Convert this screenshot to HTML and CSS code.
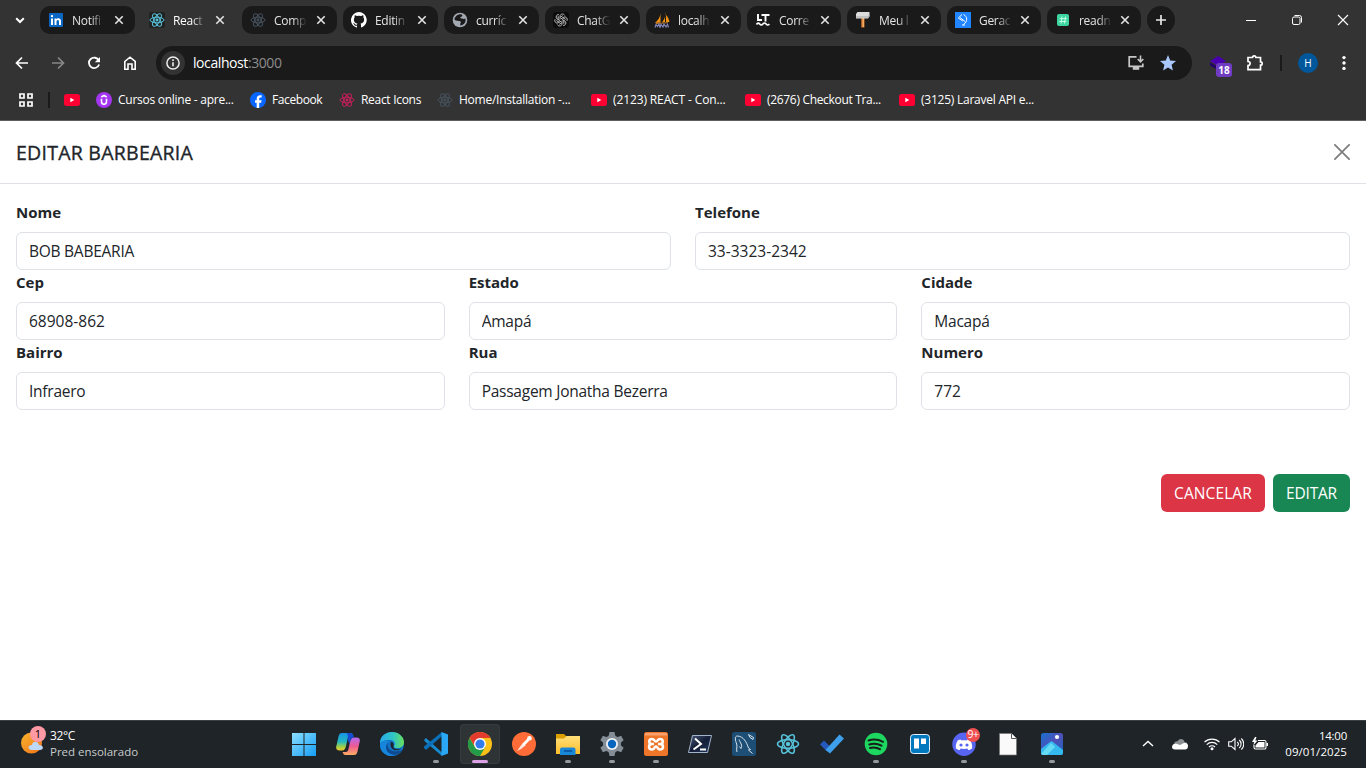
FILE: index.html
```html
<!DOCTYPE html>
<html lang="pt-BR">
<head>
<meta charset="utf-8">
<title>React App</title>
<link rel="stylesheet" href="styles.css">
</head>
<body>
<svg class="defs" aria-hidden="true">
  <symbol id="react" viewBox="0 0 24 24"><g fill="none" stroke="currentColor" stroke-width="1.5"><ellipse cx="12" cy="12" rx="10.500" ry="4.200"/><ellipse cx="12" cy="12" rx="10.500" ry="4.200" transform="rotate(60 12 12)"/><ellipse cx="12" cy="12" rx="10.500" ry="4.200" transform="rotate(120 12 12)"/></g><circle cx="12" cy="12" r="2.200" fill="currentColor"/></symbol>
  <symbol id="x" viewBox="0 0 10 10"><path d="M1.3 1.3l7.4 7.4M8.7 1.3L1.3 8.7" stroke="currentColor" stroke-width="1.6" fill="none"/></symbol>
  <symbol id="yt" viewBox="0 0 16 16"><rect y="2" width="16" height="12" rx="2.5" fill="#ff0033"/><path d="M6.3 5.7v4.6l4-2.3z" fill="#fff"/></symbol>
  <linearGradient id="win" x1="0" y1="0" x2="1" y2="1"><stop offset="0" stop-color="#8be0ff"/><stop offset="1" stop-color="#159cf5"/></linearGradient>
  <linearGradient id="sun" x1="0" y1="0" x2="1" y2="1"><stop offset="0" stop-color="#f7b52c"/><stop offset="1" stop-color="#f2711c"/></linearGradient>
  <linearGradient id="edgeTop" x1="0" y1="0" x2="1" y2="0"><stop offset="0" stop-color="#2aa7ec"/><stop offset=".55" stop-color="#30c5c5"/><stop offset="1" stop-color="#68e05a"/></linearGradient>
  <linearGradient id="copA" x1="0" y1="0" x2="0" y2="1"><stop offset="0" stop-color="#1692e8"/><stop offset=".5" stop-color="#25b8c0"/><stop offset=".8" stop-color="#a6d044"/><stop offset="1" stop-color="#f6c52e"/></linearGradient>
  <linearGradient id="copB" x1="0" y1="0" x2="0" y2="1"><stop offset="0" stop-color="#b46af2"/><stop offset=".5" stop-color="#ee5a91"/><stop offset="1" stop-color="#ffae62"/></linearGradient>
  <linearGradient id="photo" x1="0" y1="0" x2="1" y2="1"><stop offset="0" stop-color="#1771d0"/><stop offset=".5" stop-color="#5050b8"/><stop offset="1" stop-color="#1466bd"/></linearGradient>
  <linearGradient id="fold" x1="0" y1="0" x2="0" y2="1"><stop offset="0" stop-color="#ffe07a"/><stop offset="1" stop-color="#fbbd2c"/></linearGradient>
  <linearGradient id="ps" x1="0" y1="0" x2="1" y2="1"><stop offset="0" stop-color="#4b5c7c"/><stop offset=".5" stop-color="#141d36"/><stop offset="1" stop-color="#233961"/></linearGradient>
</svg>

<header class="browser">
  <div class="tabstrip">
    <svg class="tab-search" viewBox="0 0 12 12"><path d="M2.2 4.2L6 8l3.8-3.8" fill="none" stroke="#fff" stroke-width="2"/></svg>
    <div class="tab"><svg class="fav" viewBox="0 0 16 16"><rect x="1" y="1" width="14" height="14" rx="1" fill="#0a66c2"/><path d="M3 6.4h2V13H3zM6.5 6.4h1.9v.9c1-1.5 4.6-1.6 4.6 1.7v4h-2V9.7c0-2.2-2.5-2-2.5 0V13h-2z" fill="#fff"/><circle cx="4" cy="4.1" r="1.2" fill="#fff"/></svg><span class="tab-title">Notifi</span><svg class="tab-x"><use href="#x"/></svg></div>
    <div class="tab active"><svg class="fav cyan boxed"><use href="#react"/></svg><span class="tab-title">React</span><svg class="tab-x"><use href="#x"/></svg></div>
    <div class="tab"><svg class="fav slate"><use href="#react"/></svg><span class="tab-title">Comp</span><svg class="tab-x"><use href="#x"/></svg></div>
    <div class="tab"><svg class="fav" viewBox="0 0 16 16"><path fill="#fff" d="M8 0a8 8 0 0 0-2.5 15.6c.4.1.5-.2.5-.4v-1.5c-2.2.5-2.7-1-2.7-1-.4-.9-.9-1.2-.9-1.2-.7-.5.1-.5.1-.5.8.1 1.2.8 1.2.8.7 1.3 1.9.9 2.3.7.1-.5.3-.9.5-1.1-1.8-.2-3.6-.9-3.6-4 0-.9.3-1.6.8-2.1-.1-.2-.4-1 .1-2.1 0 0 .7-.2 2.2.8a7.7 7.7 0 0 1 4 0c1.5-1 2.2-.8 2.2-.8.4 1.1.2 1.9.1 2.1.5.6.8 1.3.8 2.1 0 3.1-1.9 3.8-3.7 4 .3.2.6.7.6 1.5v2.2c0 .2.1.5.5.4A8 8 0 0 0 8 0z"/></svg><span class="tab-title">Editin</span><svg class="tab-x"><use href="#x"/></svg></div>
    <div class="tab"><svg class="fav" viewBox="0 0 16 16"><circle cx="8" cy="8" r="7.3" fill="#a3a9b3"/><path d="M7 2.4c2-.6 3.5.2 3.4 1.4 0 1-2.3.7-2.1 2 .1 1 1.6.4 2.7 1 .8.5 1.9.1 2.4-.3 1 4-2 7-5.4 7 .8-1-.2-1.800.6-2.500.9-.8-.1-2.300-1.600-2.100C5 9 3 8.200 2.300 7.200 2.800 5 4.700 2.700 7 2.400z" fill="#1a1a1a"/></svg><span class="tab-title">curríc</span><svg class="tab-x"><use href="#x"/></svg></div>
    <div class="tab"><svg class="fav" viewBox="0 0 16 16"><rect width="16" height="16" rx="3" fill="#0b0b0b"/><g fill="none" stroke="#ddd" stroke-width=".8"><path id="petal" d="M7 7.400V4.300c0-2.600 3.700-3.100 4.600-.9M7 5.300L9.800 3.700"/><use href="#petal" transform="rotate(60 8 8)"/><use href="#petal" transform="rotate(120 8 8)"/><use href="#petal" transform="rotate(180 8 8)"/><use href="#petal" transform="rotate(240 8 8)"/><use href="#petal" transform="rotate(300 8 8)"/></g></svg><span class="tab-title">ChatG</span><svg class="tab-x"><use href="#x"/></svg></div>
    <div class="tab"><svg class="fav" viewBox="0 0 16 16"><path d="M6.500 1C6.500 5 4 8 1 11l5.500-.5zM11 0c1 4-1 8-3 10.500l3-.5zM12 3c2 2 3 4 3.500 7H12z" fill="#f29111"/><path d="M2 11.500l12-.8" stroke="#b67830"/><path d="M1 15.500l1-3 1.500 2L5 12l1 3.500 1-3 2 2.500 1-3 2 3 1.500-2.500 1 3" stroke="#8286b8" stroke-width="1.200" fill="none"/></svg><span class="tab-title">localh</span><svg class="tab-x"><use href="#x"/></svg></div>
    <div class="tab narrow"><svg class="fav" viewBox="0 0 16 16"><path d="M3 2v6h4M6.500 3h8M10.500 3v6.500" stroke="#fff" stroke-width="1.900" fill="none"/><path d="M1.500 12.500q1.600-2.500 3.200-.5t3.200 0 3.200 0 3.200 0" stroke="#fff" stroke-width="1.700" fill="none"/></svg><span class="tab-title">Corre</span><svg class="tab-x"><use href="#x"/></svg></div>
    <div class="tab narrow"><svg class="fav" viewBox="0 0 16 16"><path d="M6.200 5h3.300v10.500H6.200z" fill="#c86f2b"/><path d="M7.500 6H9v9H7.500z" fill="#f5ad65"/><path d="M2.500 0h12v4.500l-1.500 2H1V2z" fill="#dcdcdc"/><path d="M1 5h12l1.500-2" stroke="#aaa" fill="none"/></svg><span class="tab-title">Meu l</span><svg class="tab-x"><use href="#x"/></svg></div>
    <div class="tab narrow"><svg class="fav" viewBox="0 0 16 16"><rect width="16" height="16" fill="#2185ff"/><path d="M7 2.500L3.300 6l4.500 3M8.500 2.500c4 2 4.500 7 0 10M5 5.500l5 4M7 13h3" stroke="#fff" fill="none"/></svg><span class="tab-title">Gerac</span><svg class="tab-x"><use href="#x"/></svg></div>
    <div class="tab narrow"><svg class="fav" viewBox="0 0 16 16"><rect x="2" y="2" width="12" height="12" rx="2" fill="#3dd6a0"/><path d="M7 4.500l-1 7M10.500 4.500l-1 7M4.800 6.700h7M4.300 9.500h7" stroke="#c4ffe8"/></svg><span class="tab-title">readn</span><svg class="tab-x"><use href="#x"/></svg></div>
    <button class="new-tab"><svg viewBox="0 0 12 12"><path d="M6 1v10M1 6h10" stroke="#e6e6e6" stroke-width="1.700"/></svg></button>
    <div class="window-controls">
      <svg viewBox="0 0 12 12"><path d="M1 6.500h10" stroke="#fff"/></svg>
      <svg viewBox="0 0 12 12"><rect x="1.500" y="3" width="7.500" height="7.500" rx="1.500" fill="none" stroke="#fff"/><path d="M3.500 1.500H8.500a2 2 0 0 1 2 2V8.500" fill="none" stroke="#fff"/></svg>
      <svg viewBox="0 0 12 12"><path d="M1 1l10 10M11 1L1 11" stroke="#fff" stroke-width="1.100"/></svg>
    </div>
  </div>

  <div class="toolbar">
    <nav class="nav">
      <svg viewBox="0 0 16 16"><path d="M14 8H3M8 2.500L2.500 8 8 13.500" fill="none" stroke="#fff" stroke-width="1.700"/></svg>
      <svg viewBox="0 0 16 16"><path d="M2 8h11M8 2.500L13.500 8 8 13.500" fill="none" stroke="#888" stroke-width="1.700"/></svg>
      <svg viewBox="0 0 16 16"><path d="M12.800 5.500a5.200 5.200 0 1 0 .3 4" fill="none" stroke="#fff" stroke-width="1.800"/><path d="M14 2v5.200H8.800z" fill="#fff"/></svg>
      <svg viewBox="0 0 16 16"><path d="M2.800 6.500L8 2.200l5.200 4.300v7.700H10V9H6v5.200H2.800z" fill="none" stroke="#fff" stroke-width="1.600"/></svg>
    </nav>
    <div class="omnibox">
      <span class="site-info"><svg viewBox="0 0 16 16"><circle cx="8" cy="8" r="6.100" fill="none" stroke="#eee" stroke-width="1.500"/><path d="M8 7.200v4M8 4.300v1.600" stroke="#eee" stroke-width="1.600"/></svg></span>
      <span class="url">localhost<span class="port">:3000</span></span>
      <svg class="install" viewBox="0 0 18 18"><path d="M9.500 2.800H2.200v9.500h13.600V9.500" fill="none" stroke="#c7c7c7" stroke-width="1.700"/><path d="M5.800 13h6.400v2.800H5.800z" fill="#c7c7c7"/><path d="M13.500 1.500v6M10.700 5l2.800 2.800L16.300 5" fill="none" stroke="#c7c7c7" stroke-width="1.600"/></svg>
      <svg class="star" viewBox="0 0 18 18"><path d="M9 1l2.200 5.400 5.800.5-4.400 3.900 1.300 5.700L9 13.500l-4.900 3 1.300-5.700L1 6.900l5.800-.5z" fill="#a8c7fa"/></svg>
    </div>
    <div class="extensions">
      <div class="ext"><svg viewBox="0 0 16 16"><path d="M0 6l8-5 8 5-8 5z" fill="#4b00b0"/><path d="M0 7.500l8 4.500v3l-8-4.500z" fill="#23006b"/></svg><span class="ext-badge">18</span></div>
      <svg class="puzzle" viewBox="0 0 18 18"><path d="M2 3.500h4.500a1.700 1.700 0 0 1 3.400 0h4.600v4.300a1.700 1.700 0 0 1 0 3.400v4.500H2v-4.200c2.800 0 2.800-4 0-4z" fill="none" stroke="#fff" stroke-width="1.700"/></svg>
      <i class="divider"></i>
      <span class="avatar">H</span>
      <svg class="kebab" viewBox="0 0 4 16"><g fill="#fff"><circle cx="2" cy="2.600" r="1.700"/><circle cx="2" cy="8" r="1.700"/><circle cx="2" cy="13.400" r="1.700"/></g></svg>
    </div>
  </div>

  <div class="bookmarks">
    <svg class="apps" viewBox="0 0 14 14"><path d="M1 1h4v4H1zM9 1h4v4H9zM1 9h4v4H1zM9 9h4v4H9z" fill="none" stroke="#fff" stroke-width="1.700"/></svg>
    <i class="divider"></i>
    <a class="bm b0"><svg><use href="#yt"/></svg></a>
    <a class="bm b1"><svg viewBox="0 0 16 16"><circle cx="8" cy="8" r="8" fill="#a435f0"/><path d="M5.500 6.800v2.800c0 3.700 5 3.700 5 0V6.800M5.300 5L8 3.500 10.700 5" fill="none" stroke="#fff" stroke-width="1.600"/></svg><span>Cursos online - apre...</span></a>
    <a class="bm b2"><svg viewBox="0 0 16 16"><circle cx="8" cy="8" r="8" fill="#0866ff"/><path d="M6.700 16v-5.300H5V8.200h1.700V7c0-2.600 1.200-3.800 3.700-3.800l1.300.1v2.200h-1c-1.200 0-1.500.5-1.500 1.500v1.200h2.400l-.4 2.500h-2V16z" fill="#fff"/></svg><span>Facebook</span></a>
    <a class="bm b3"><svg class="pink"><use href="#react"/></svg><span>React Icons</span></a>
    <a class="bm b4"><svg class="slate"><use href="#react"/></svg><span>Home/Installation -...</span></a>
    <a class="bm b5"><svg><use href="#yt"/></svg><span>(2123) REACT - Con...</span></a>
    <a class="bm b6"><svg><use href="#yt"/></svg><span>(2676) Checkout Tra...</span></a>
    <a class="bm b7"><svg><use href="#yt"/></svg><span>(3125) Laravel API e...</span></a>
  </div>
</header>

<main class="modal">
  <div class="modal-header">
    <h5>EDITAR BARBEARIA</h5>
    <button class="btn-close"><svg viewBox="0 0 16 16"><path d="M.9.900l14.200 14.200M15.100.900L.9 15.100" stroke="#000" stroke-width="1.800" stroke-linecap="round"/></svg></button>
  </div>
  <form class="modal-body">
    <div class="row two">
      <label>Nome<input value="BOB BABEARIA"></label>
      <label>Telefone<input class="num" value="33-3323-2342"></label>
    </div>
    <div class="row three">
      <label>Cep<input class="num" value="68908-862"></label>
      <label>Estado<input value="Amapá"></label>
      <label>Cidade<input value="Macapá"></label>
      <label>Bairro<input value="Infraero"></label>
      <label>Rua<input value="Passagem Jonatha Bezerra"></label>
      <label>Numero<input class="num" value="772"></label>
    </div>
    <div class="actions">
      <button type="button" class="btn danger">CANCELAR</button>
      <button type="button" class="btn success">EDITAR</button>
    </div>
  </form>
</main>

<footer class="taskbar">
  <div class="weather">
    <div class="weather-icon"><svg viewBox="0 0 26 28"><circle cx="11.500" cy="16" r="10.500" fill="url(#sun)"/><path d="M12 23c-4.500 0-4.500-5 0-5 .5-4 6-4.500 7 0 5 0 5 5 1 5z" fill="#bdd8fb"/></svg><span class="weather-badge">1</span></div>
    <div class="weather-text"><span class="temp">32°C</span><span class="cond">Pred ensolarado</span></div>
  </div>
  <div class="apps-row">
    <div class="app"><svg viewBox="0 0 24 24"><path d="M0 1h11.500v11H0zM12.500 1H24v11H12.500zM0 13h11.500v11H0zM12.500 13H24v11H12.500z" fill="url(#win)"/></svg></div>
    <div class="app"><svg viewBox="0 0 24 24"><path d="M6 1h8.500c1.700 0 2.300 1 2.900 3h-2.900c-2 0-2.500 1-3 3l-1.500 7c-.6 2.500-1.500 4.500-4 4.500H3.500C0 18.500-.3 16 .5 13.500L2.500 4.500C3.200 2 4 1 6 1z" fill="url(#copA)"/><path d="M18 23H9.500c-1.700 0-2.300-1-2.900-3h2.900c2 0 2.500-1 3-3L14 10c.6-2.500 1.500-4.500 4-4.500h2.500c3.500 0 3.800 2.500 3 5l-2 9C20.800 22 20 23 18 23z" fill="url(#copB)"/><path d="M14.500 1c1.700 0 2.300 1 2.900 3l.6 1.500c-2.500 0-3.400 2-4 4.500l-.5 2-2-4.500c.5-2 .5-4-.5-6.500z" fill="#174bd0"/></svg></div>
    <div class="app"><svg viewBox="0 0 24 24"><circle cx="12" cy="12" r="12" fill="#1372c4"/><path d="M0 12C-.5 5 5 0 12 0c7 0 12 5 12 10 0 4-3 6-6.500 6-2.500 0-4-1-3.500-2 1.500-2 1-6-4.500-6C5 8 1 9 0 12z" fill="url(#edgeTop)"/><path d="M9 9c-5 4-2 13 6 14C8 26 0 21 0 13c1-4 5-5 9-4z" fill="#1685dc"/><path d="M8 11c-2 6 5 11 14 7-3 5-9 6-13 3-4-3-3.500-8-1-10z" fill="#0d4a91"/><path d="M11 10c2 0 3 2 2.500 4-1 3 4 4 8 2.500-5 4-13 1-10.500-6.500z" fill="#1e2427"/></svg></div>
    <div class="app run"><svg viewBox="0 0 24 24"><path d="M0 8l2-2 16 14.500V24L1 9.500z" fill="#168bd2"/><path d="M0 16l2 2L18 4V0L0 14.500z" fill="#0b70b8"/><path d="M17.500 0L24 2.500v19L17.500 24z" fill="#2aa8f5"/></svg></div>
    <div class="app current"><svg viewBox="0 0 24 24"><circle cx="12" cy="12" r="12" fill="#fbc116"/><path d="M1.600 6A12 12 0 0 1 22.400 6H12L7 15z" fill="#e33b2e"/><path d="M1.600 6A12 12 0 0 0 12 24l5.200-9L12 12l-5.200 3z" fill="#249b48"/><circle cx="12" cy="12" r="6" fill="#fff"/><circle cx="12" cy="12" r="4.600" fill="#317bed"/></svg></div>
    <div class="app"><svg viewBox="0 0 24 24"><circle cx="12" cy="12" r="12" fill="#ff6c37"/><path d="M5 19l5-7 4 1-5 4z" fill="#ffe8df"/><path d="M10 12l5.500-5.500 2 2L12 14z" fill="#fff"/><circle cx="17.500" cy="6.300" r="2.300" fill="#fff"/></svg></div>
    <div class="app run"><svg viewBox="0 0 24 24"><path d="M0 2h8l2.500 2.500V9H0z" fill="#dba000"/><path d="M0 6.500h8l2.500-2.500H24v18H0z" fill="url(#fold)"/><path d="M4 23v-5.500a2 2 0 0 1 2-2h11.500a2 2 0 0 1 2 2V23z" fill="#1887d8"/><path d="M8 19h8" stroke="#0b57a4" stroke-width="1.800"/></svg></div>
    <div class="app run"><svg viewBox="0 0 24 24"><g fill="#858e96"><circle cx="12" cy="12" r="9"/><path id="cog" d="M9.500 0h5l1 5h-7zM9.500 24h5l1-5h-7z"/><use href="#cog" transform="rotate(60 12 12)"/><use href="#cog" transform="rotate(120 12 12)"/></g><circle cx="12" cy="12" r="6" fill="#eef2f5"/><circle cx="12" cy="12" r="4.200" fill="#0865bd"/></svg></div>
    <div class="app run"><svg viewBox="0 0 24 24"><rect width="24" height="24" rx="2.500" fill="#ef7528"/><path d="M1 1h22v2.500H1z" fill="#f8a06d"/><path d="M10 12H8c-3.700 0-3.700-5 0-5 2.800 0 2 2.500 4 2.500S13.200 7 16 7c3.700 0 3.700 5 0 5h-2M10 12H8c-4 0-4 5.500 0 5.500 2.800 0 2-3 4-3s1.200 3 4 3c4 0 4-5.500 0-5.500" fill="none" stroke="#fff" stroke-width="2.500"/></svg></div>
    <div class="app"><svg viewBox="0 0 24 24"><path d="M4.500 3.500h19l-4 17H.500z" fill="url(#ps)" stroke="#a4b3cc" stroke-width="1"/><path d="M7 6.500l6 5.500-7.500 5.500M12 17.500h6" fill="none" stroke="#fff" stroke-width="2"/></svg></div>
    <div class="app"><svg viewBox="0 0 24 24"><rect width="24" height="24" rx="2.500" fill="#1d4e75"/><path d="M5 20c-1-3 .5-5-.3-8C3.500 9 2 4 5.500 4c6 .5 9 6 11 12l2 1.500-2 .5 4 3.500M7 7.500c1 3 4 6 2 9l-1.500-2M16.500 2.500l1.500 3 3 2 .5-2-2.500-1.500z" fill="none" stroke="#d9e4ed"/></svg></div>
    <div class="app"><svg class="cyan" viewBox="0 0 24 24"><use href="#react"/></svg></div>
    <div class="app"><svg viewBox="0 0 24 24"><path d="M0 12.500L4 8.500l6.500 6.500-4 4z" fill="#2559bd"/><path d="M5.500 18L19.500 2.500l4.500 4L10 21.500z" fill="#3ea0ed"/></svg></div>
    <div class="app run"><svg viewBox="0 0 24 24"><circle cx="12" cy="12" r="11.300" fill="#1ed760"/><path d="M4.500 8.500c5-1.500 10-1 14.500 1.300M5.300 12.500c4.500-1.300 8.500-.8 12.200 1.200M6 16c3.500-.9 6.700-.6 10 1.200" fill="none" stroke="#152018" stroke-width="2" stroke-linecap="round"/></svg></div>
    <div class="app"><svg viewBox="0 0 24 24"><rect x="2.500" y="2.500" width="19" height="19" rx="3" fill="#0079bf" stroke="#e2f3ff" stroke-width="1"/><path d="M6 6.500h5v10H6zM13 6.500h5V12h-5z" fill="#fff"/></svg></div>
    <div class="app run"><svg viewBox="0 0 24 24"><circle cx="12" cy="12.300" r="11.700" fill="#5865f2"/><path d="M8.500 7.500l1 1c1.500-.3 3.500-.3 5 0l1-1c1.500.2 2.700.7 3.200 1.500C20 12 20.500 14 20 16.500c-1 .8-2.300 1.500-3.700 1.500l-.9-1.500c-2 .6-4.800.6-6.800 0L7.700 18c-1.400 0-2.700-.7-3.700-1.500-.5-2.500 0-5 1.300-7.500.5-.8 1.700-1.300 3.200-1.500z" fill="#fff"/><circle cx="9" cy="13" r="1.600" fill="#5865f2"/><circle cx="15" cy="13" r="1.600" fill="#5865f2"/></svg><span class="app-badge">9+</span></div>
    <div class="app"><svg viewBox="0 0 24 24"><path d="M3.500 1.500h12l5 5V23h-17z" fill="#fafafa" stroke="#777" stroke-width=".7"/><path d="M15.500 1.500v5h5" fill="#fff" stroke="#555" stroke-width="1"/></svg></div>
    <div class="app run"><svg viewBox="0 0 24 24"><rect x="1" y="1" width="22" height="22" rx="2.500" fill="url(#photo)"/><path d="M1 17l9-7c1-1 2-1 3 0l10 8v3a2 2 0 0 1-2 2H3a2 2 0 0 1-2-2z" fill="#35baf0"/><path d="M1 22L11 11l4 4-8 8H3z" fill="#66dbf4"/><circle cx="17" cy="5" r="2.100" fill="#fff"/></svg></div>
  </div>
  <div class="tray">
    <svg class="chev" viewBox="0 0 12 12"><path d="M1 8l5-4.500L11 8" fill="none" stroke="#fff" stroke-width="1.400"/></svg>
    <svg class="cloud" viewBox="0 0 16 16"><path d="M2 9C2 5 5 5 5.500 5.500 6.500 2 12 2 12.500 6c3 0 3.500 3 3.500 4z" fill="#8e9193"/><path d="M0 11c0-3 3-4 5-3l3 1 4-2c3-.5 4 1.500 4 3.500 0 1.500-1 3-3 3H3c-2 0-3-1-3-2.500z" fill="#fff"/></svg>
    <svg viewBox="0 0 16 16"><g fill="none" stroke="#fff" stroke-width="1.200"><path d="M.500 6.200a10.500 10.500 0 0 1 15 0M2.800 8.600a7.300 7.300 0 0 1 10.400 0M5 11a4.200 4.200 0 0 1 6 0"/></g><circle cx="8" cy="12.700" r="1.500" fill="#fff"/></svg>
    <svg viewBox="0 0 16 16"><path d="M.700 5.800h2.600L7 2.500v11L3.300 10.200H.7zM9.300 5.800c1.300 1.300 1.300 3.100 0 4.400M11.300 4c2.400 2.200 2.400 5.800 0 8M13.300 2.500c3.300 3 3.300 8 0 11" fill="none" stroke="#fff" stroke-width="1.100"/></svg>
    <svg viewBox="0 0 16 16"><path d="M6 4.500h6.500a1.500 1.500 0 0 1 1.500 1.500v5.500a1.500 1.500 0 0 1-1.500 1.500h-9A1.500 1.500 0 0 1 2 11.500V9" fill="none" stroke="#fff" stroke-width="1.100"/><path d="M6.500 6h6v5.500h-9V9.500zM14.500 7H16v3h-1.500zM3 1L0 6h2.200L1.300 9.500 5.500 4.500H3.300L4.500 1z" fill="#fff"/></svg>
    <div class="clock"><span>14:00</span><span class="date">09/01/2025</span></div>
  </div>
</footer>
</body>
</html>
```
FILE: styles.css
```css
* { box-sizing: border-box; }
body {
  margin: 0;
  width: 1366px;
  height: 768px;
  overflow: hidden;
  display: flex;
  flex-direction: column;
  background: #fff;
  color: #212529;
  font-family: "Segoe UI", "Open Sans", "Noto Sans", sans-serif;
}
svg { display: block; flex: none; }
button { font: inherit; border: 0; padding: 0; }
.defs { position: absolute; width: 0; height: 0; }
.cyan { color: #58c4dc; }
.slate { color: #46515c; }
.pink { color: #c81e5b; }

.browser { height: 121px; background: #333; border-bottom: 1px solid #5e5e5e; color: #fff; flex: none; }
.tabstrip { display: flex; align-items: center; height: 40px; padding-left: 14px; gap: 6px; }
.tab-search { width: 12px; height: 12px; margin-right: 8px; }
.tab { width: 95px; height: 28px; border-radius: 10px; background: #1a1a1a; display: flex; align-items: center; padding: 0 11px 0 8px; flex: none; }
.tab.narrow { width: 94px; }
.tab.active { background: none; }
.fav { width: 16px; height: 16px; margin-right: 8px; }
.boxed { background: #222; border-radius: 2px; }
.tab-title { width: 34px; white-space: nowrap; font-size: 12px; line-height: 17px; padding-top: 1px; letter-spacing: -.3px; color: #e3e3e3; -webkit-mask-image: linear-gradient(90deg, #000 55%, rgba(0, 0, 0, .1) 92%); mask-image: linear-gradient(90deg, #000 55%, rgba(0, 0, 0, .1) 92%); }
.active .tab-title { color: #fff; }
.tab-x { width: 10px; height: 10px; margin-left: auto; color: #e3e3e3; }
.new-tab { width: 28px; height: 28px; border-radius: 50%; background: #1a1a1a; display: grid; place-items: center; }
.new-tab svg { width: 12px; height: 12px; }
.window-controls { margin-left: auto; display: flex; gap: 34px; padding-right: 17px; }
.window-controls svg { width: 12px; height: 12px; }

.toolbar { display: flex; align-items: center; height: 46px; }
.nav { display: flex; gap: 20px; padding-left: 14px; width: 156px; }
.nav svg { width: 16px; height: 16px; }
.omnibox { width: 1036px; height: 34px; border-radius: 17px; background: #1a1a1a; display: flex; align-items: center; padding: 0 15px 0 5px; }
.site-info { width: 24px; height: 24px; border-radius: 50%; background: #333; display: grid; place-items: center; }
.site-info svg { width: 16px; height: 16px; }
.url { margin-left: 8px; font-size: 14px; letter-spacing: -.42px; padding-bottom: 2px; }
.port { color: #8c8c8c; }
.install { width: 18px; height: 18px; margin-left: auto; margin-right: 14px; }
.star { width: 18px; height: 18px; }
.extensions { display: flex; align-items: center; flex: 1; padding-left: 18px; }
.ext { position: relative; width: 16px; height: 16px; }
.ext svg { width: 16px; height: 16px; }
.ext-badge { position: absolute; left: 6px; top: 8px; width: 16px; height: 14px; border-radius: 3px; background: #6f3cc3; font-size: 10px; font-weight: 700; line-height: 14px; text-align: center; }
.puzzle { width: 18px; height: 18px; margin-left: 20px; }
.divider { width: 2px; height: 16px; background: #1a1a1a; }
.extensions .divider { margin-left: 16px; }
.avatar { width: 20px; height: 20px; border-radius: 50%; background: #01579b; margin-left: 16px; text-align: center; font-size: 10px; line-height: 20px; }
.kebab { width: 4px; height: 16px; margin-left: 24px; }

.bookmarks { display: flex; align-items: center; height: 28px; padding-left: 19px; font-size: 12px; white-space: nowrap; }
.apps { width: 14px; height: 14px; margin-right: 15px; }
.bookmarks .divider { margin-right: 14px; }
.bm { display: flex; align-items: center; gap: 6px; }
.bm svg { width: 16px; height: 16px; }
.bm span { padding-bottom: 2px; }
.b0 { width: 32px; }
.b1 { width: 154px; letter-spacing: -.26px; }
.b2 { width: 89px; letter-spacing: -.4px; }
.b3 { width: 98px; letter-spacing: -.3px; }
.b4, .b5, .b6, .b7 { width: 154px; letter-spacing: -.24px; }
.b5 { letter-spacing: -.12px; }
.b6 { letter-spacing: -.32px; }

.modal { flex: 1; }
.modal-header { display: flex; justify-content: space-between; align-items: center; height: 63px; padding: 0 16px; border-bottom: 1px solid #dee2e6; }
.modal-header h5 { margin: 0; font-size: 19.5px; font-weight: 500; -webkit-text-stroke: .35px #212529; letter-spacing: .25px; line-height: 30px; padding-top: 2px; }
.btn-close { background: none; opacity: .5; }
.btn-close svg { width: 16px; height: 16px; }
.modal-body { padding: 16px; }
.row { display: grid; column-gap: 24px; }
.two { grid-template-columns: repeat(2, 1fr); }
.three { grid-template-columns: repeat(3, 1fr); }
.row label { display: block; height: 70px; font-size: 15px; font-weight: 700; line-height: 24px; letter-spacing: 0; }
.row input { display: block; width: 100%; height: 38px; margin-top: 8px; padding: 6px 12px; border: 1px solid #dee2e6; border-radius: 6px; background: #fff; color: #212529; font: 400 15.5px/24px "Segoe UI", "Open Sans", "Noto Sans", sans-serif; letter-spacing: -.25px; }
.row input.num { letter-spacing: 0; }
.actions { display: flex; justify-content: flex-end; gap: 8px; margin-top: 64px; }
.btn { height: 38px; border-radius: 6px; color: #fff; font-size: 15.5px; line-height: 24px; letter-spacing: .1px; }
.danger { width: 104px; background: #dc3545; }
.success { width: 77px; background: #198754; letter-spacing: -.2px; }

.taskbar { height: 48px; flex: none; display: flex; background: #1e2427; border-top: 1px solid #3a3f41; color: #fff; font-size: 12px; line-height: 16px; }
.weather { width: 282px; display: flex; padding: 6px 0 0 20px; }
.weather-icon { position: relative; width: 26px; height: 28px; margin-right: 4px; }
.weather-icon svg { width: 26px; height: 28px; }
.weather-badge { position: absolute; left: 10px; top: -1px; width: 16px; height: 16px; border-radius: 50%; background: #ff99a4; color: #000; font-size: 11px; text-align: center; }
.weather-text { display: flex; flex-direction: column; padding-top: 1px; }
.temp { letter-spacing: -.4px; }
.cond { color: #c9cbcc; font-size: 11.5px; letter-spacing: -.02px; }
.apps-row { display: flex; gap: 4px; height: 46px; align-items: center; padding-left: 2px; }
.app { position: relative; width: 40px; height: 40px; display: grid; place-items: center; border-radius: 4px; }
.app svg { width: 24px; height: 24px; }
.current { background: #2e3336; box-shadow: inset 0 0 0 1px #373c3e; }
.run::after, .current::after { content: ""; position: absolute; bottom: 1px; left: 17px; width: 6px; height: 3px; border-radius: 2px; background: #969a9c; }
.current::after { left: 12px; width: 16px; background: #dba3e6; }
.app-badge { position: absolute; left: 22px; top: 4px; width: 14px; height: 14px; border-radius: 50%; background: #f04f51; font-size: 10.5px; line-height: 13px; text-align: center; letter-spacing: -.5px; }
.tray { margin-left: auto; height: 46px; display: flex; align-items: center; gap: 8px; padding-right: 19px; }
.tray svg { width: 16px; height: 16px; }
.tray .chev { width: 12px; height: 12px; margin-right: 10px; }
.tray .cloud { margin-right: 8px; }
.clock { width: 71px; display: flex; flex-direction: column; align-items: flex-end; font-size: 11.5px; letter-spacing: -.25px; }
.date { letter-spacing: .07px; }
```
